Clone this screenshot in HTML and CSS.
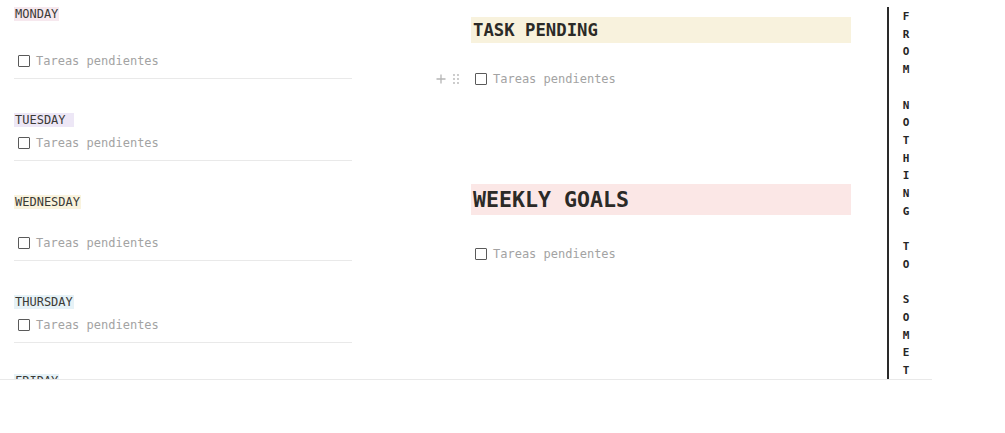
FILE: index.html
```html
<!DOCTYPE html>
<html>
<head>
<meta charset="utf-8">
<link rel="stylesheet" href="styles.css">
</head>
<body>
<div class="page">
  <div class="days">
    <div class="day">
      <div class="label"><span class="tag pink">MONDAY</span></div>
      <div class="todo gap-lg"><span class="box"></span><span class="ph">Tareas pendientes</span></div>
      <div class="divider"></div>
    </div>
    <div class="day">
      <div class="label"><span class="tag purple wide">TUESDAY</span></div>
      <div class="todo gap-sm"><span class="box"></span><span class="ph">Tareas pendientes</span></div>
      <div class="divider"></div>
    </div>
    <div class="day">
      <div class="label"><span class="tag yellow">WEDNESDAY</span></div>
      <div class="todo gap-md"><span class="box"></span><span class="ph">Tareas pendientes</span></div>
      <div class="divider"></div>
    </div>
    <div class="day">
      <div class="label"><span class="tag blue">THURSDAY</span></div>
      <div class="todo gap-sm"><span class="box"></span><span class="ph">Tareas pendientes</span></div>
      <div class="divider"></div>
    </div>
    <div class="day last">
      <div class="label"><span class="tag blue">FRIDAY</span></div>
    </div>
  </div>

  <div class="main">
    <h2 class="heading h-yellow">TASK PENDING</h2>
    <div class="todo task-row">
      <span class="handles">
        <svg width="10" height="10" viewBox="0 0 10 10"><path d="M5 0.5v9M0.5 5h9" stroke="#b5b5b5" stroke-width="1.3" fill="none"/></svg>
        <svg width="6" height="10" viewBox="0 0 6 10"><g fill="#b5b5b5"><circle cx="1" cy="1" r="0.9"/><circle cx="5" cy="1" r="0.9"/><circle cx="1" cy="5" r="0.9"/><circle cx="5" cy="5" r="0.9"/><circle cx="1" cy="9" r="0.9"/><circle cx="5" cy="9" r="0.9"/></g></svg>
      </span>
      <span class="box"></span><span class="ph">Tareas pendientes</span>
    </div>
    <h2 class="heading h-pink">WEEKLY GOALS</h2>
    <div class="todo goals-row"><span class="box"></span><span class="ph">Tareas pendientes</span></div>
  </div>

  <div class="side">
    <div class="vtext">F<br>R<br>O<br>M<br><br>N<br>O<br>T<br>H<br>I<br>N<br>G<br><br>T<br>O<br><br>S<br>O<br>M<br>E<br>T<br>H<br>I<br>N<br>G</div>
  </div>
</div>
</body>
</html>
```

FILE: styles.css
```css
html, body {
  margin: 0;
  padding: 0;
  background: #ffffff;
}

body {
  font-family: "DejaVu Sans Mono", "Liberation Mono", monospace;
  color: #37352f;
}

.page {
  width: 932px;
  height: 380px;
  overflow: hidden;
  border-bottom: 1px solid #e9e9e9;
  display: flex;
  align-items: flex-start;
  padding-left: 14px;
  box-sizing: border-box;
}

/* Left column: days */
.days {
  width: 338px;
  flex: none;
  padding-top: 7px;
}

.day {
  margin-bottom: 34px;
}

.day.last {
  margin-top: -3px;
}

.label {
  height: 14px;
  line-height: 14px;
  font-size: 12px;
}

.tag {
  display: inline-block;
  padding: 0 1px;
  color: #3b3a36;
}

.tag.wide { padding-right: 8px; }
.pink { background: #f6e8ee; }
.purple { background: #ede7f6; }
.yellow { background: #f9f3de; }
.blue { background: #e6f2f7; }

.todo {
  position: relative;
  display: flex;
  align-items: center;
  height: 24px;
  padding-left: 4px;
  font-size: 12px;
}

.gap-lg { margin-top: 28px; }
.gap-md { margin-top: 22px; }
.gap-sm { margin-top: 4px; }

.box {
  width: 12px;
  height: 12px;
  box-sizing: border-box;
  border: 1.5px solid #5a5a5a;
  border-radius: 1px;
  margin-right: 6px;
  flex: none;
}

.ph {
  color: #a3a3a3;
}

.divider {
  margin-top: 5px;
  height: 1px;
  background: #e9e9e9;
}

/* Middle column */
.main {
  width: 380px;
  flex: none;
  margin-left: 119px;
  padding-top: 17px;
}

.heading {
  margin: 0;
  font-weight: bold;
  color: #2b2a27;
  padding-left: 2px;
}

.h-yellow {
  background: #f8f2dd;
  height: 26px;
  line-height: 27px;
  font-size: 17.3px;
}

.h-pink {
  background: #fbe7e6;
  height: 31px;
  line-height: 31px;
  font-size: 21.6px;
  margin-top: 93px;
}

.task-row { margin-top: 24px; }
.goals-row { margin-top: 27px; }

.handles {
  position: absolute;
  left: -35px;
  top: 7px;
  display: flex;
  align-items: center;
  gap: 7px;
}

.handles svg { display: block; }

/* Right vertical line + text */
.side {
  flex: none;
  margin-left: 36px;
  margin-top: 7px;
  height: 373px;
  border-left: 2.5px solid #2a2a2a;
  padding-left: 12px;
  padding-top: 1px;
  box-sizing: border-box;
}

.vtext {
  font-size: 11px;
  font-weight: bold;
  line-height: 17.7px;
  color: #262626;
  width: 10px;
  text-align: center;
}
```
